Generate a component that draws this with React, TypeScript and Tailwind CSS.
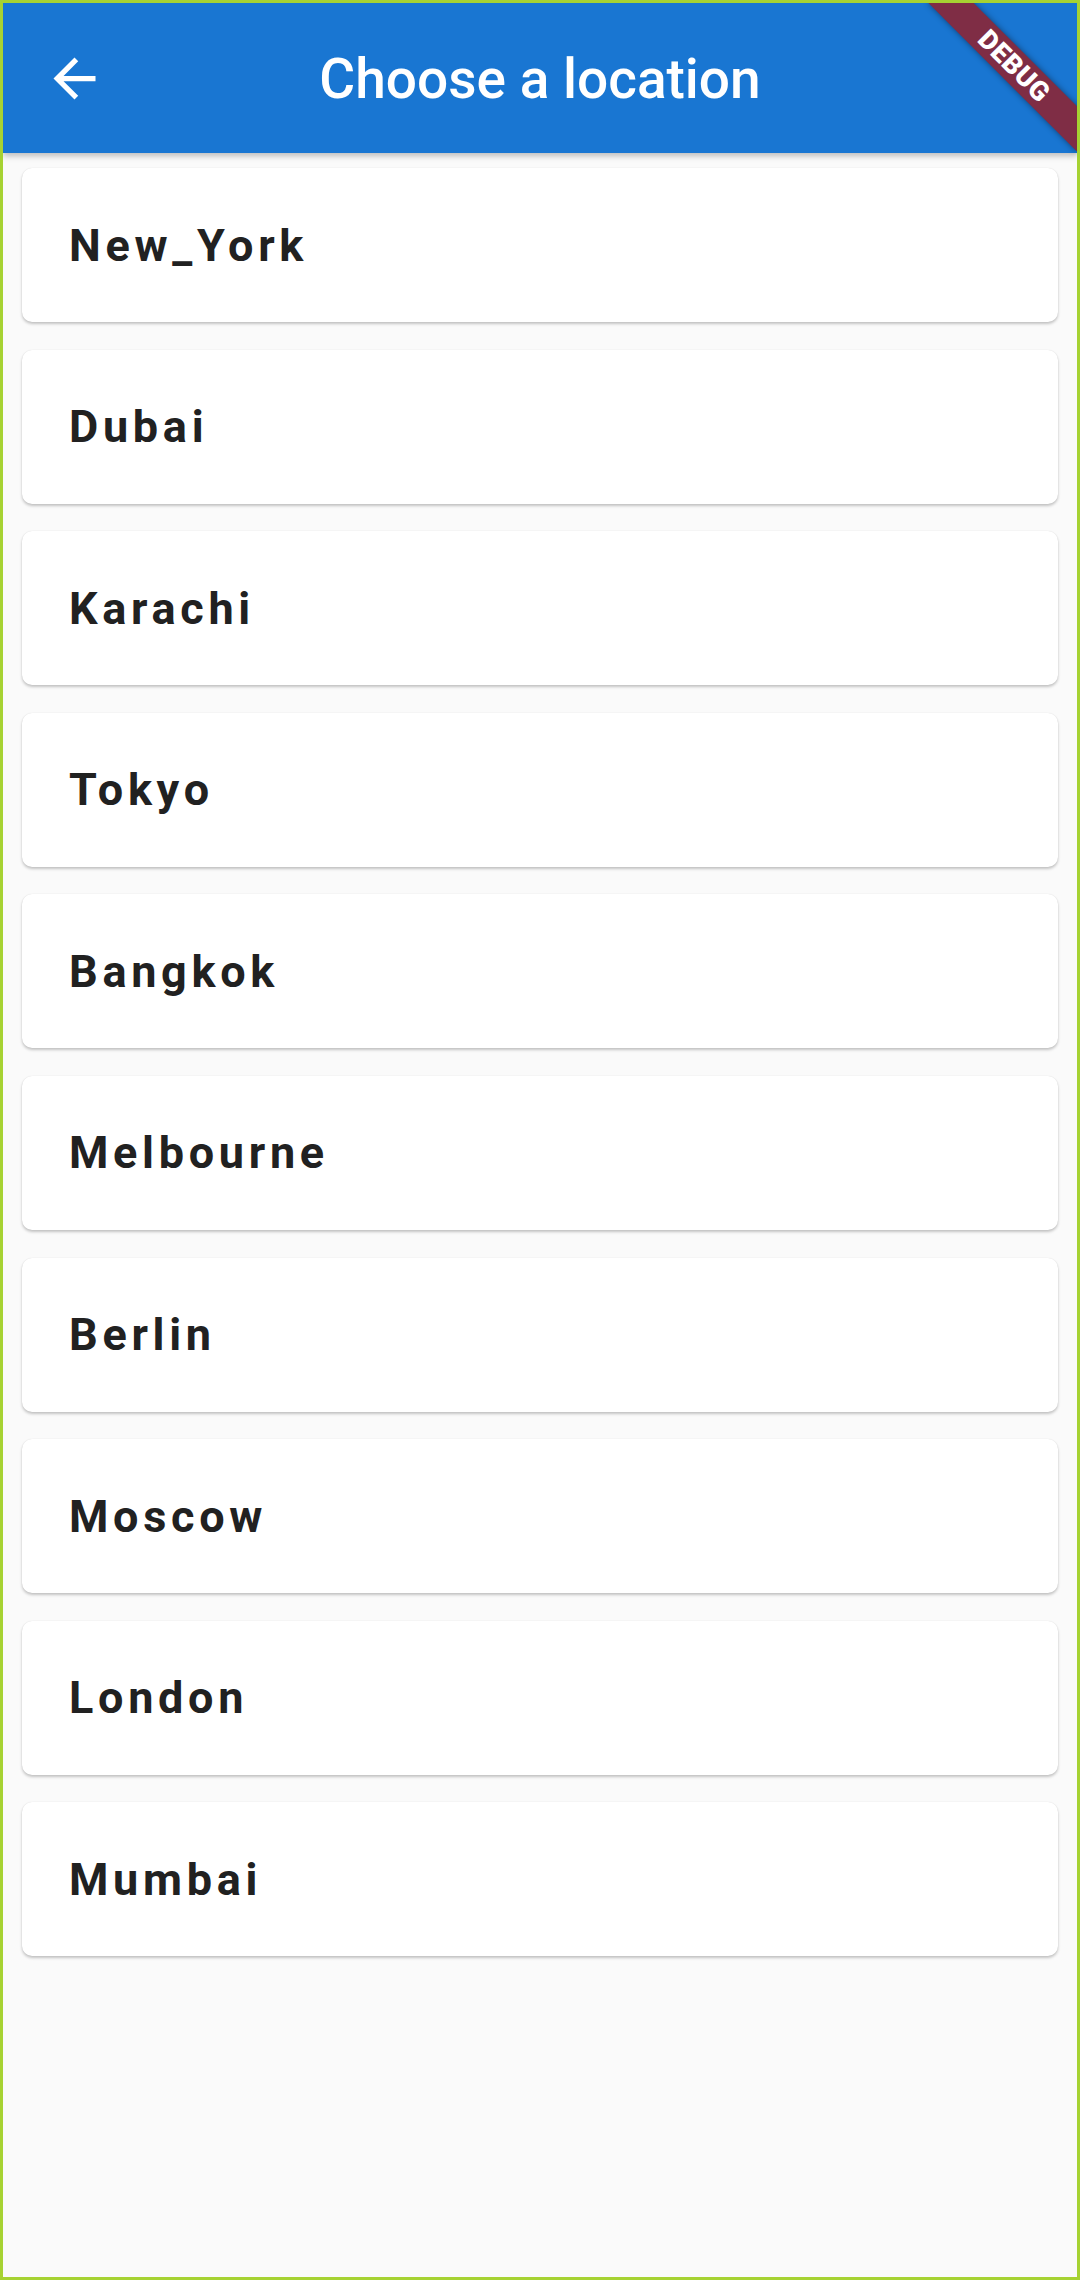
import React from 'react';

const locations = [
  'New_York',
  'Dubai',
  'Karachi',
  'Tokyo',
  'Bangkok',
  'Melbourne',
  'Berlin',
  'Moscow',
  'London',
  'Mumbai',
];

const BackArrow = () => (
  <svg width="63" height="63" viewBox="0 0 24 24" fill="white">
    <path d="M20 11H7.83l5.59-5.59L12 4l-8 8 8 8 1.41-1.41L7.83 13H20v-2z" />
  </svg>
);

const DebugBanner = () => (
  // flutter style debug ribbon in the top right corner
  <div
    className="absolute z-20 left-[906px] top-[47px] w-[210px] h-[32px] rotate-45 bg-[#7f2d45] flex items-center justify-center shadow-[0_0_6px_rgba(0,0,0,0.45)]"
  >
    <span className="text-white text-[27px] leading-none font-black tracking-[0.5px]" style={{ fontFamily: 'Roboto, sans-serif' }}>
      DEBUG
    </span>
  </div>
);

export default function App() {
  return (
    <div
      className="relative w-[1080px] h-[2280px] overflow-hidden border-[3px] border-[#a6d232] bg-[#fafafa]"
      style={{ fontFamily: 'Roboto, "Liberation Sans", sans-serif' }}
    >
      {/* App Bar */}
      <div className="relative z-10 h-[150px] bg-[#1976d2] grid grid-cols-[1fr_auto_1fr] items-center shadow-[0_3px_6px_rgba(0,0,0,0.25)]">
        <div className="pl-[40px] flex items-center">
          <BackArrow />
        </div>
        <h1 className="text-white text-[55px] font-medium leading-none pt-[2px]">Choose a location</h1>
        <div />
      </div>

      {/* Location list */}
      <div className="flex flex-col gap-[27.6px] px-[19px] pt-[15px]">
        {locations.map((name) => (
          <div
            key={name}
            className="h-[154px] bg-white rounded-[10px] flex items-center pl-[47px] shadow-[0_2px_3px_rgba(0,0,0,0.22),0_0_1px_rgba(0,0,0,0.12)]"
          >
            <span className="text-[#212121] text-[45px] font-bold leading-none tracking-[4.7px]">{name}</span>
          </div>
        ))}
      </div>

      <DebugBanner />
    </div>
  );
}
